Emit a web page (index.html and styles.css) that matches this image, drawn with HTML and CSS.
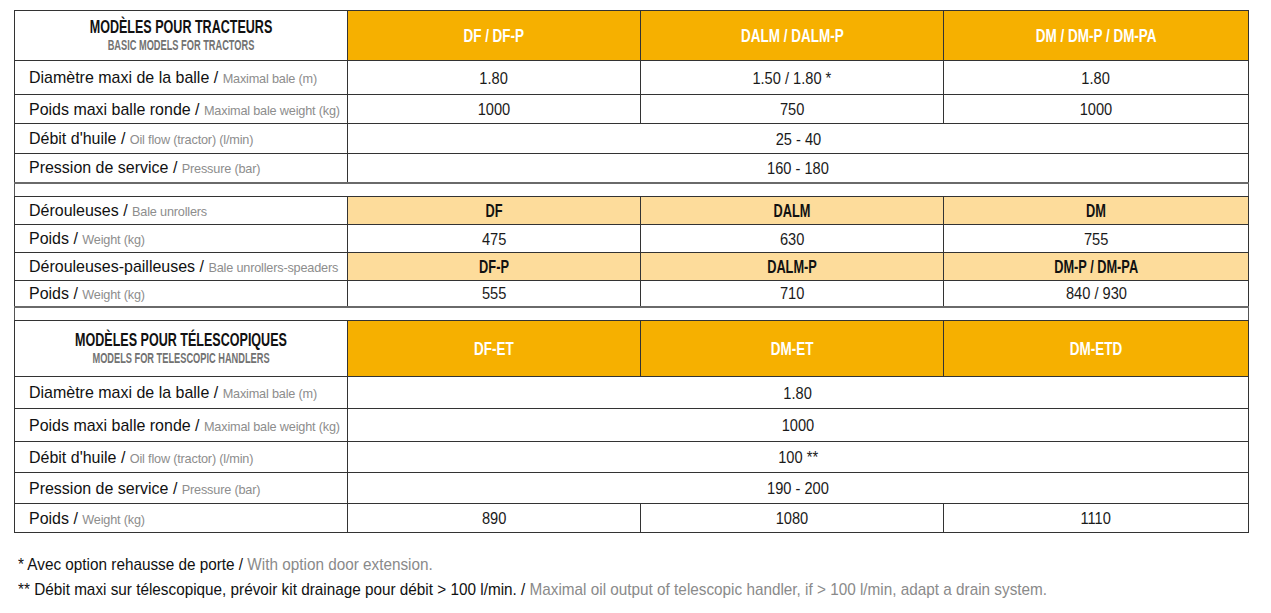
FILE: index.html
```html
<!DOCTYPE html>
<html lang="fr">
<head>
<meta charset="utf-8">
<title>Dérouleuses – caractéristiques</title>
<link rel="stylesheet" href="styles.css">
</head>
<body>
<main class="page">
  <table class="specs">
    <colgroup>
      <col class="c-label">
      <col class="c-1">
      <col class="c-2">
      <col class="c-3">
    </colgroup>
    <tbody>
      <tr class="r-head1">
        <td class="head-label"><div class="ht">MODÈLES POUR TRACTEURS</div><div class="hs">BASIC MODELS FOR TRACTORS</div></td>
        <td class="gold"><span class="cd">DF / DF-P</span></td>
        <td class="gold"><span class="cd">DALM / DALM-P</span></td>
        <td class="gold"><span class="cd">DM / DM-P / DM-PA</span></td>
      </tr>
      <tr class="r-34">
        <td class="lbl"><span class="lt">Diamètre maxi de la balle / <span class="en">Maximal bale (m)</span></span></td>
        <td class="val"><span class="nm">1.80</span></td><td class="val"><span class="nm">1.50 / 1.80 *</span></td><td class="val"><span class="nm">1.80</span></td>
      </tr>
      <tr class="r-29">
        <td class="lbl"><span class="lt">Poids maxi balle ronde / <span class="en">Maximal bale weight (kg)</span></span></td>
        <td class="val"><span class="nm">1000</span></td><td class="val"><span class="nm">750</span></td><td class="val"><span class="nm">1000</span></td>
      </tr>
      <tr class="r-30">
        <td class="lbl"><span class="lt">Débit d'huile / <span class="en">Oil flow (tractor) (l/min)</span></span></td>
        <td class="val" colspan="3"><span class="nm">25 - 40</span></td>
      </tr>
      <tr class="r-29 before-gap">
        <td class="lbl"><span class="lt">Pression de service / <span class="en">Pressure (bar)</span></span></td>
        <td class="val" colspan="3"><span class="nm">160 - 180</span></td>
      </tr>
      <tr class="gap"><td colspan="4"></td></tr>
      <tr class="r-28">
        <td class="lbl"><span class="lt">Dérouleuses / <span class="en">Bale unrollers</span></span></td>
        <td class="light"><span class="cd">DF</span></td><td class="light"><span class="cd">DALM</span></td><td class="light"><span class="cd">DM</span></td>
      </tr>
      <tr class="r-28">
        <td class="lbl"><span class="lt">Poids / <span class="en">Weight (kg)</span></span></td>
        <td class="val"><span class="nm">475</span></td><td class="val"><span class="nm">630</span></td><td class="val"><span class="nm">755</span></td>
      </tr>
      <tr class="r-28">
        <td class="lbl"><span class="lt">Dérouleuses-pailleuses / <span class="en">Bale unrollers-speaders</span></span></td>
        <td class="light"><span class="cd">DF-P</span></td><td class="light"><span class="cd">DALM-P</span></td><td class="light"><span class="cd">DM-P / DM-PA</span></td>
      </tr>
      <tr class="r-26 before-gap">
        <td class="lbl"><span class="lt">Poids / <span class="en">Weight (kg)</span></span></td>
        <td class="val"><span class="nm">555</span></td><td class="val"><span class="nm">710</span></td><td class="val"><span class="nm">840 / 930</span></td>
      </tr>
      <tr class="gap"><td colspan="4"></td></tr>
      <tr class="r-head2">
        <td class="head-label"><div class="ht">MODÈLES POUR TÉLESCOPIQUES</div><div class="hs">MODELS FOR TELESCOPIC HANDLERS</div></td>
        <td class="gold"><span class="cd">DF-ET</span></td>
        <td class="gold"><span class="cd">DM-ET</span></td>
        <td class="gold"><span class="cd">DM-ETD</span></td>
      </tr>
      <tr class="r-32">
        <td class="lbl"><span class="lt">Diamètre maxi de la balle / <span class="en">Maximal bale (m)</span></span></td>
        <td class="val" colspan="3"><span class="nm">1.80</span></td>
      </tr>
      <tr class="r-33">
        <td class="lbl"><span class="lt">Poids maxi balle ronde / <span class="en">Maximal bale weight (kg)</span></span></td>
        <td class="val" colspan="3"><span class="nm">1000</span></td>
      </tr>
      <tr class="r-31">
        <td class="lbl"><span class="lt">Débit d'huile / <span class="en">Oil flow (tractor) (l/min)</span></span></td>
        <td class="val" colspan="3"><span class="nm">100 **</span></td>
      </tr>
      <tr class="r-31">
        <td class="lbl"><span class="lt">Pression de service / <span class="en">Pressure (bar)</span></span></td>
        <td class="val" colspan="3"><span class="nm">190 - 200</span></td>
      </tr>
      <tr class="r-29">
        <td class="lbl"><span class="lt">Poids / <span class="en">Weight (kg)</span></span></td>
        <td class="val"><span class="nm">890</span></td><td class="val"><span class="nm">1080</span></td><td class="val"><span class="nm">1110</span></td>
      </tr>
    </tbody>
  </table>

  <div class="notes">
    <p><span class="nt">* Avec option rehausse de porte / <span class="en">With option door extension.</span></span></p>
    <p><span class="nt">** Débit maxi sur télescopique, prévoir kit drainage pour débit &gt; 100 l/min. / <span class="en">Maximal oil output of telescopic handler, if &gt; 100 l/min, adapt a drain system.</span></span></p>
  </div>
</main>
</body>
</html>
```

FILE: styles.css
```css
html, body {
  margin: 0;
  padding: 0;
  background: #ffffff;
}

.page {
  padding: 10px 0 0 14px;
  font-family: "Liberation Sans", Arial, sans-serif;
  color: #111;
}

.specs {
  border-collapse: collapse;
  table-layout: fixed;
  width: 1234px;
  border: 1px solid #555;
}

.c-label { width: 333px; }
.c-1 { width: 293px; }
.c-2 { width: 303px; }
.c-3 { width: 305px; }

.specs td {
  border: 1px solid #333;
  padding: 0;
  text-align: center;
  vertical-align: middle;
  line-height: 18px;
  white-space: nowrap;
  overflow: hidden;
}

/* row labels */
.specs td.lbl {
  text-align: left;
  padding-left: 14px;
  padding-top: 2px;
}

.lt {
  display: inline-block;
  font-size: 17px;
  transform: scaleX(0.94);
  transform-origin: left center;
  color: #111;
}

.lt .en {
  font-size: 13.5px;
  letter-spacing: -0.2px;
  color: #8d8d8d;
}

/* values */
.specs td.val {
  padding-top: 2px;
}

.nm {
  display: inline-block;
  font-size: 17px;
  transform: scaleX(0.86);
  color: #1a1a1a;
}

/* condensed bold headings */
.cd {
  display: inline-block;
  font-weight: bold;
  transform: scaleX(0.71);
}

.head-label {
  padding-bottom: 2px !important;
}

.head-label .ht {
  font-weight: bold;
  font-size: 19px;
  line-height: 20px;
  color: #111;
  transform: scaleX(0.66);
}

.head-label .hs {
  font-weight: bold;
  font-size: 14px;
  line-height: 16px;
  color: #727272;
  transform: scaleX(0.66);
}

.specs td.gold {
  background: #f6b000;
  color: #ffffff;
  font-size: 19px;
}

.specs td.light {
  background: #fddc9b;
  color: #111;
  font-size: 18px;
  padding-top: 1px;
}

.r-head1 { height: 50px; }
.r-head2 { height: 56px; }
.r-34 { height: 34px; }
.r-33 { height: 33px; }
.r-32 { height: 32px; }
.r-31 { height: 31px; }
.r-30 { height: 30px; }
.r-29 { height: 29px; }
.r-28 { height: 28px; }
.r-26 { height: 26px; }

.before-gap td { border-bottom: 2px solid #6a6a6a; }

.gap { height: 14px; }
.gap td { border-left: 1px solid #555; border-right: 1px solid #555; }

/* footnotes */
.notes {
  margin-top: 19px;
  margin-left: 4px;
  font-size: 17px;
  line-height: 25px;
  color: #111;
}

.notes p { margin: 0; white-space: nowrap; }

.nt {
  display: inline-block;
  transform: scaleX(0.9);
  transform-origin: left center;
}

.nt .en {
  color: #8a8a8a;
}
```
